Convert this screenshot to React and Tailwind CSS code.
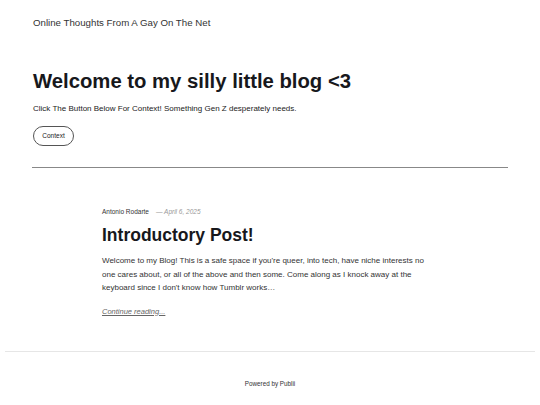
export default function App() {
  return (
    <div className="w-[540px] h-[405px] bg-white overflow-hidden" style={{ fontFamily: '"Liberation Sans", Arial, sans-serif' }}>
      <header className="px-[33px] pt-[17px] h-[50px]">
        <div className="text-[9.7px] leading-[12px] text-[#333]">Online Thoughts From A Gay On The Net</div>
      </header>
      <section className="px-[33px] pt-[18px]">
        <h1 className="text-[20.3px] leading-[26px] font-bold text-[#17181c]">Welcome to my silly little blog &lt;3</h1>
        <p className="mt-[10px] text-[8px] leading-[10px] text-[#222]">Click The Button Below For Context! Something Gen Z desperately needs.</p>
        <button className="mt-[12px] h-[20px] w-[41px] rounded-full border border-[#555] text-[6.5px] text-[#222] flex items-center justify-center">Context</button>
      </section>
      <div className="mx-[32px] mt-[21px] h-px bg-[#888]"></div>
      <article className="pl-[102px] pt-[40px]">
        <div className="flex items-center text-[6.5px] leading-[8px]">
          <span className="text-[#333]">Antonio Rodarte</span>
          <span className="ml-[7px] text-[#999] italic">— April 6, 2025</span>
        </div>
        <h2 className="mt-[8px] text-[17.5px] leading-[22px] font-bold text-[#17181c]">Introductory Post!</h2>
        <p className="mt-[8px] w-[326px] text-[8px] leading-[13.5px] text-[#333]">Welcome to my Blog! This is a safe space if you're queer, into tech, have niche interests no one cares about, or all of the above and then some. Come along as I knock away at the keyboard since I don't know how Tumblr works…</p>
        <a className="mt-[12px] block text-[7.5px] leading-[10px] italic underline text-[#666]">Continue reading...</a>
      </article>
      <div className="mx-[5px] mt-[34px] h-px bg-[#e6e6e6]"></div>
      <footer className="pt-[28px] text-center text-[6.3px] leading-[8px] text-[#333]">Powered by Publii</footer>
    </div>
  );
}
